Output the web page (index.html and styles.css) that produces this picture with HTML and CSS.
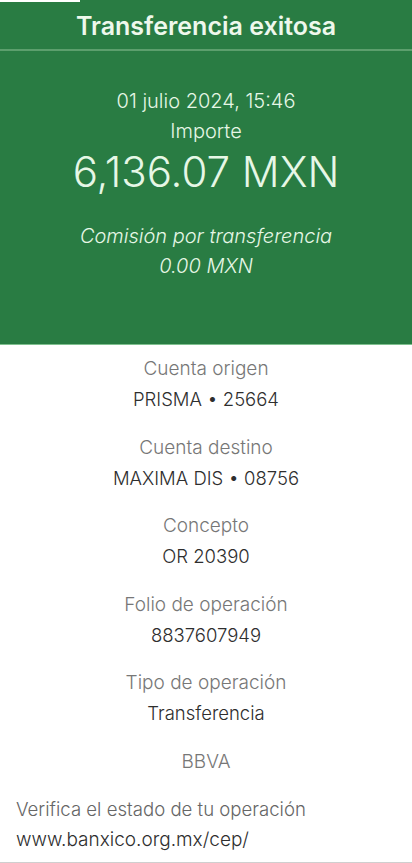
FILE: index.html
```html
<!DOCTYPE html>
<html lang="es">
<head>
<meta charset="utf-8">
<title>Transferencia exitosa</title>
<link rel="stylesheet" href="styles.css">
</head>
<body>
<div class="page">
  <header class="hero">
    <div class="strip"><span class="strip-block"></span></div>
    <div class="title-bar">
      <h1 class="title">Transferencia exitosa</h1>
    </div>
    <div class="summary">
      <p class="line">01 julio 2024, 15:46</p>
      <p class="line">Importe</p>
      <p class="amount">6,136.07 MXN</p>
      <p class="line italic fee-label">Comisión por transferencia</p>
      <p class="line italic">0.00 MXN</p>
    </div>
  </header>
  <main class="details">
    <div class="group">
      <p class="label">Cuenta origen</p>
      <p class="value">PRISMA • 25664</p>
    </div>
    <div class="group">
      <p class="label">Cuenta destino</p>
      <p class="value">MAXIMA DIS • 08756</p>
    </div>
    <div class="group">
      <p class="label">Concepto</p>
      <p class="value">OR 20390</p>
    </div>
    <div class="group">
      <p class="label">Folio de operación</p>
      <p class="value">8837607949</p>
    </div>
    <div class="group">
      <p class="label">Tipo de operación</p>
      <p class="value">Transferencia</p>
    </div>
    <div class="group">
      <p class="label">BBVA</p>
    </div>
    <div class="verify">
      <p class="label">Verifica el estado de tu operación</p>
      <p class="value">www.banxico.org.mx/cep/</p>
    </div>
  </main>
</div>
</body>
</html>
```
FILE: styles.css
```css
* { box-sizing: border-box; }
html, body { margin: 0; padding: 0; background: #fff; }
body { font-family: Inter, Roboto, "Noto Sans", sans-serif; }
p, h1 { margin: 0; }

.page { display: flex; flex-direction: column; }

.hero {
  background: #297c43;
  color: #e6f7e6;
  border-bottom: 1px solid #7fc08f;
}
.strip { height: 2px; display: flex; }
.strip-block { width: 80px; background: #fff; }

.title-bar {
  height: 49px;
  display: flex;
  align-items: center;
  justify-content: center;
  border-bottom: 2px solid #5c9f6d;
}
.title {
  font-size: 25px;
  font-weight: 600;
  color: #eef8ec;
}

.summary {
  display: flex;
  flex-direction: column;
  align-items: center;
  padding: 35px 0 63px;
}
.line { font-size: 20px; line-height: 30px; font-weight: 300; }
.italic { font-style: italic; font-weight: 300; }
.amount {
  font-size: 42px;
  line-height: 52px;
  font-weight: 300;
}
.fee-label { margin-top: 23px; }

.details {
  display: flex;
  flex-direction: column;
  padding: 9px 0 7px;
  border-bottom: 1px solid #cfcfcf;
}
.group {
  display: flex;
  flex-direction: column;
  align-items: center;
  margin-bottom: 18.6px;
}
.label { font-size: 19px; line-height: 30px; color: #777; font-weight: 300; }
.value { font-size: 18.5px; line-height: 30px; color: #2e2e2e; font-weight: 300; }

.verify {
  display: flex;
  flex-direction: column;
  align-items: flex-start;
  padding: 0 16px;
  margin-top: -2px;
}
.verify .label { font-size: 18.6px; color: #666; }
.verify .value { font-size: 19px; line-height: 31px; }
```
